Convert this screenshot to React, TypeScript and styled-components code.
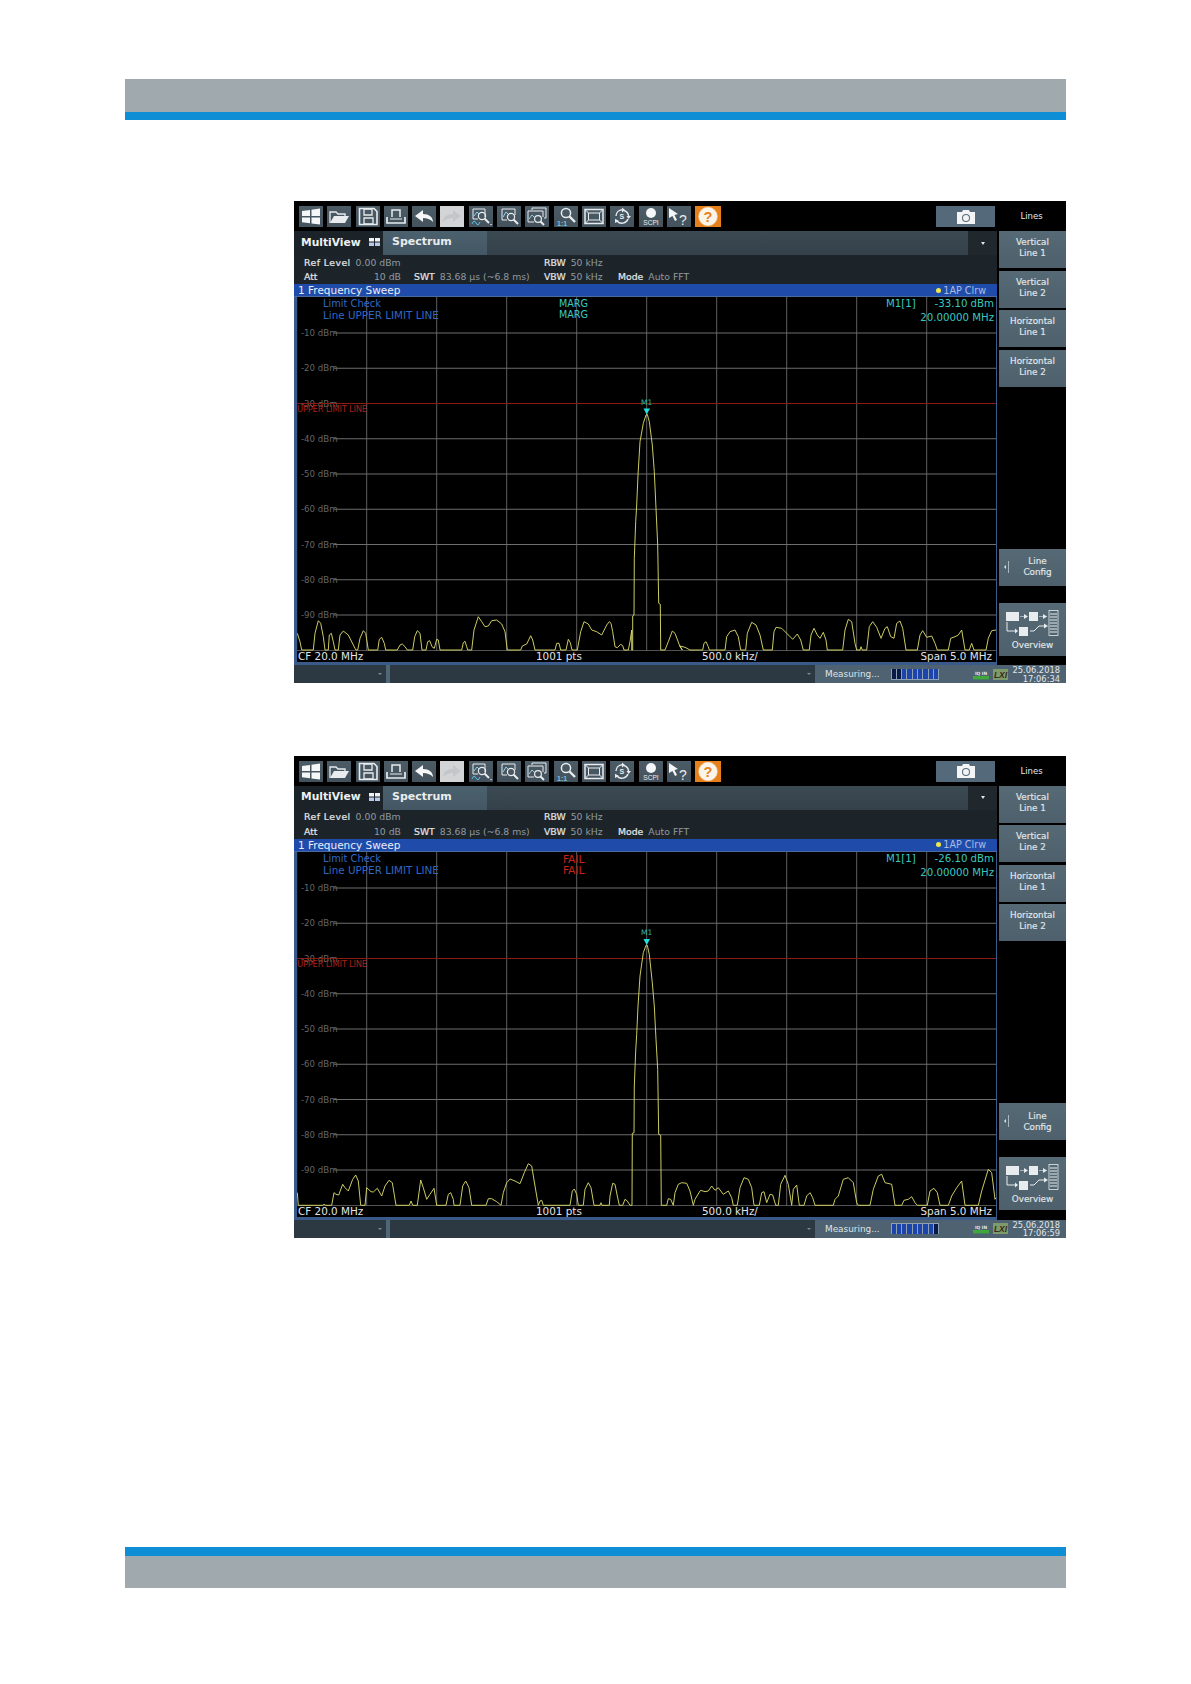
import React from "react";
import styled, { createGlobalStyle } from "styled-components";

const Global = createGlobalStyle`
  html, body { margin: 0; padding: 0; background: #fff; }
  body { font-family: "DejaVu Sans", "Liberation Sans", sans-serif; }
`;

const Page = styled.div`
  width: 1191px;
  height: 1684px;
  padding-top: 79px;
  box-sizing: border-box;
  overflow: hidden;
`;
const HeaderBand = styled.div`
  margin-left: 124.5px;
  width: 941.5px;
  height: 33px;
  background: #a0a9ad;
  border-bottom: 8px solid #0d8ed5;
`;
const FooterBand = styled.div`
  margin: 309.5px 0 0 124.5px;
  width: 941.5px;
  height: 32px;
  background: #a0a9ad;
  border-top: 9px solid #0d8ed5;
`;
const Screens = styled.div`
  margin: 81px 0 0 294px;
  width: 772px;
  display: flex;
  flex-direction: column;
  gap: 72.5px;
`;
const Screen = styled.section`
  width: 772px;
  height: 482px;
  background: #000;
  display: flex;
  flex-direction: column;
  color: #dfe5e8;
`;

/* toolbar */
const TopBar = styled.div`
  height: 30px;
  display: flex;
  flex: none;
`;
const Tools = styled.div`
  flex: 1;
  display: flex;
  align-items: flex-start;
  padding: 5px 4px 0 5px;
  gap: 4.3px;
`;
const Tool = styled.div<{ $tone?: "off" | "help" }>`
  width: ${(p) => (p.$tone === "help" ? 26 : 24)}px;
  height: 21px;
  flex: none;
  background: ${(p) => (p.$tone === "off" ? "#d2d4d5" : p.$tone === "help" ? "#e5801c" : "linear-gradient(#4c5c67, #43525c)")};
  svg { display: block; width: 100%; height: 21px; }
`;
const CameraButton = styled.div`
  margin-left: auto;
  width: 59px;
  height: 21px;
  background: #54697a;
  display: flex;
  align-items: center;
  justify-content: center;
  svg { width: 20px; height: 16px; display: block; }
`;
const PanelTitle = styled.div`
  width: 67px;
  flex: none;
  padding-right: 2px;
  box-sizing: border-box;
  text-align: center;
  font-size: 8.5px;
  line-height: 30px;
  color: #e6e9eb;
`;

/* body */
const Body = styled.div`
  flex: none;
  height: 434px;
  display: flex;
`;
const Main = styled.div`
  width: 703px;
  flex: none;
  display: flex;
  flex-direction: column;
`;
const TabRow = styled.div`
  height: 24px;
  flex: none;
  display: flex;
  align-items: stretch;
  background: #1c2328;
`;
const MultiView = styled.div`
  width: 89px;
  flex: none;
  display: flex;
  align-items: center;
  padding: 0 0 2px 7px;
  box-sizing: border-box;
  font-size: 10.7px;
  font-weight: 700;
  color: #eef0f1;
  gap: 8px;
  svg { width: 11px; height: 8px; flex: none; }
`;
const SpectrumTab = styled.div`
  width: 104px;
  flex: none;
  background: linear-gradient(#4c616e, #435663);
  font-size: 11px;
  font-weight: 700;
  line-height: 22px;
  padding-left: 9px;
  box-sizing: border-box;
  color: #e8ecee;
`;
const TabFill = styled.div`
  flex: 1;
  background: linear-gradient(#3c4a53, #34414a);
`;
const TabMenu = styled.div`
  width: 29px;
  flex: none;
  background: #20282d;
  display: flex;
  align-items: center;
  justify-content: center;
  &::after {
    content: "";
    border-left: 2.5px solid transparent;
    border-right: 2.5px solid transparent;
    border-top: 3px solid #dfe5e8;
  }
`;
const InfoPanel = styled.div`
  height: 29px;
  flex: none;
  background: #1d2429;
  box-sizing: border-box;
  padding: 0 0 0 10px;
  display: grid;
  grid-template-columns: 110px 130px 74px 1fr;
  grid-auto-rows: 14.5px;
  font-size: 9.3px;
  align-items: center;
  white-space: nowrap;
  color: #8f9aa1;
`;
const InfoCell = styled.div`
  display: flex;
  gap: 5px;
`;
const InfoAtt = styled(InfoCell)`
  justify-content: space-between;
  padding-right: 13px;
`;
const InfoKey = styled.span<{ $wide?: boolean }>`
  color: #e4e7e9;
  -webkit-text-stroke: 0.2px #e4e7e9;
  letter-spacing: ${(p) => (p.$wide ? "0.45px" : "0")};
`;
const Frame = styled.div`
  flex: 1;
  display: flex;
  flex-direction: column;
  border-left: 3px solid #3a5a8a;
  border-right: 1px solid #3a5a8a;
  border-bottom: 3px solid #3a5a8a;
`;
const TitleBar = styled.div`
  height: 13px;
  flex: none;
  margin-left: -3px;
  margin-right: -1px;
  padding: 0 11px 0 4px;
  background: #1f4cab;
  border-bottom: 1px solid #4a6aa0;
  box-sizing: border-box;
  display: flex;
  align-items: center;
  justify-content: space-between;
  font-size: 10.5px;
  color: #e9edf6;
`;
const TraceTag = styled.span`
  display: flex;
  align-items: center;
  gap: 2px;
  font-size: 9.6px;
  color: #a9bce0;
  &::before {
    content: "";
    width: 5px;
    height: 5px;
    border-radius: 50%;
    background: #f0e84a;
  }
`;
const Plot = styled.div`
  position: relative;
  height: 354px;
  flex: none;
  background: #000;
  svg { position: absolute; left: 0; top: 0; width: 699px; height: 354px; }
`;
const Overlay = styled.div<{ $x: number; $y: number; $color: string; $right?: boolean; $size?: number }>`
  position: absolute;
  top: ${(p) => p.$y}px;
  ${(p) => (p.$right ? `right: ${p.$x}px;` : `left: ${p.$x}px;`)}
  font-size: ${(p) => p.$size ?? 10.2}px;
  line-height: 12px;
  white-space: nowrap;
  color: ${(p) => p.$color};
`;
const PlotFoot = styled.div`
  height: 11px;
  flex: none;
  display: grid;
  grid-template-columns: 238px 166px 1fr auto;
  padding: 0 4px 0 1px;
  font-size: 10.4px;
  line-height: 11px;
  color: #e2e4e6;
  white-space: nowrap;
`;

/* softkeys */
const Softkeys = styled.aside`
  margin-left: 2px;
  width: 67px;
  flex: none;
  display: flex;
  flex-direction: column;
  gap: 2.67px;
`;
const Softkey = styled.div`
  height: 37px;
  flex: none;
  padding-bottom: 3px;
  box-sizing: border-box;
  background: linear-gradient(#566a76, #4d606c);
  display: flex;
  align-items: center;
  justify-content: center;
  text-align: center;
  font-size: 8.8px;
  line-height: 11px;
  color: #e3e8ea;
  -webkit-text-stroke: 0.15px #e3e8ea;
`;
const LineConfig = styled(Softkey)`
  margin-top: 159.33px;
  padding: 0 0 0 10px;
  position: relative;
  &::before {
    content: "";
    position: absolute;
    left: 5px;
    top: 16px;
    border-top: 2px solid transparent;
    border-bottom: 2px solid transparent;
    border-right: 2px solid #dfe5e8;
  }
  &::after {
    content: "";
    position: absolute;
    left: 9px;
    top: 12px;
    height: 12px;
    border-left: 1px solid #aab6bd;
  }
`;
const Overview = styled(Softkey)`
  margin-top: 14.33px;
  height: 53px;
  flex-direction: column;
  justify-content: flex-start;
  padding: 7px 0 0;
  svg { width: 56px; height: 32px; display: block; margin-bottom: -2px; }
`;

/* status */
const StatusBar = styled.div`
  flex: none;
  height: 18px;
  overflow: hidden;
  display: flex;
  background: #2d3942;
`;
const Combo = styled.div<{ $w: number }>`
  width: ${(p) => p.$w}px;
  flex: none;
  box-sizing: border-box;
  background: #2d3942;
  display: flex;
  align-items: center;
  justify-content: flex-end;
  padding-right: 4px;
  &::after {
    content: "";
    border-left: 2px solid transparent;
    border-right: 2px solid transparent;
    border-top: 2px solid #7d8b94;
  }
`;
const ComboGap = styled.div`
  width: 4px;
  flex: none;
  background: #4e6676;
`;
const StatusRight = styled.div`
  flex: 1;
  background: #4e6272;
  display: flex;
  align-items: center;
  padding: 0 6px 0 10px;
`;
const Measuring = styled.span`
  font-size: 8.9px;
  width: 66px;
  flex: none;
  color: #dfe5e8;
  white-space: nowrap;
`;
const Progress = styled.div`
  width: 48px;
  height: 11px;
  flex: none;
  display: flex;
  gap: 1px;
  padding: 0.5px;
  box-sizing: border-box;
  background: #8ea0b4;
`;
const Segment = styled.div<{ $on: boolean }>`
  flex: 1;
  background: ${(p) => (p.$on ? "#1c44aa" : "#0a1a46")};
`;
const StatusIcons = styled.div`
  margin-left: 34px;
  display: flex;
  gap: 4px;
  align-items: center;
  flex: none;
  svg { display: block; }
`;
const DateTime = styled.div`
  margin-left: auto;
  padding-top: 1px;
  text-align: right;
  font-size: 8.3px;
  line-height: 8.5px;
  color: #e2e6e8;
`;

const Ink = "#e8ecee";

const Icons: React.ReactNode[] = [
  <svg viewBox="0 0 24 21" key="win">
    <path d="M3 5 11 4V10H3Z M12.5 3.8 21 2.6V10H12.5Z M3 11.5H11V17.3L3 16.2Z M12.5 11.5H21V18.6L12.5 17.5Z" fill="#f4f6f7" />
  </svg>,
  <svg viewBox="0 0 24 21" key="open">
    <path d="M3 17V6H9L11 8H18V10" fill="none" stroke={Ink} strokeWidth="1.3" />
    <path d="M3 17 7 10H22L18 17Z" fill={Ink} />
  </svg>,
  <svg viewBox="0 0 24 21" key="save">
    <path d="M3.5 2.5H18L21 5.5V18.5H3.5Z" fill="none" stroke={Ink} strokeWidth="1.6" />
    <path d="M8 3H16V9H8Z M8 12H17V18H8Z" fill="none" stroke={Ink} strokeWidth="1.3" />
  </svg>,
  <svg viewBox="0 0 24 21" key="print">
    <path d="M8 11V4H16V11" fill="none" stroke={Ink} strokeWidth="1.5" />
    <path d="M3 11V17H21V11" fill="none" stroke={Ink} strokeWidth="1.7" />
    <path d="M6 13H18" stroke={Ink} strokeWidth="1" />
  </svg>,
  <svg viewBox="0 0 24 21" key="back">
    <path d="M3 10 11 4V8C17 8 21 11 21 16 18 13 15 12 11 12V16Z" fill="#f4f6f7" />
  </svg>,
  <svg viewBox="0 0 24 21" key="fwd">
    <path d="M21 10 13 4V8C7 8 3 11 3 16 6 13 9 12 13 12V16Z" fill="#c4c7c9" />
  </svg>,
  <svg viewBox="0 0 24 21" key="zoomA">
    <path d="M4 3H16V11" fill="none" stroke={Ink} strokeWidth="1" />
    <path d="M4 3V13H9" fill="none" stroke={Ink} strokeWidth="1" />
    <path d="M5 10 8 6 10 8" fill="none" stroke="#8fd0e8" strokeWidth="1" />
    <circle cx="13" cy="10" r="3.6" fill="none" stroke={Ink} strokeWidth="1.2" />
    <path d="M15.5 12.5 20 17" stroke={Ink} strokeWidth="2" />
    <path d="M3 18Q5 13 7 17T11 16" fill="none" stroke="#5cc0e8" strokeWidth="1" />
    <path d="M21 18H23L22 19.5Z" fill={Ink} />
  </svg>,
  <svg viewBox="0 0 24 21" key="zoomB">
    <path d="M5 3H18V9 M5 3V14H10" fill="none" stroke={Ink} strokeWidth="1" />
    <path d="M6 11 9 6 11 8" fill="none" stroke="#8fd0e8" strokeWidth="1" />
    <circle cx="14" cy="11" r="3.6" fill="none" stroke={Ink} strokeWidth="1.2" />
    <path d="M16.5 13.5 21 18" stroke={Ink} strokeWidth="2" />
  </svg>,
  <svg viewBox="0 0 24 21" key="zoomC">
    <path d="M7 4V2H21V12H19" fill="none" stroke={Ink} strokeWidth="1" />
    <path d="M3 5H18V11 M3 5V16H9" fill="none" stroke={Ink} strokeWidth="1" />
    <path d="M4 13 7 9 9 11" fill="none" stroke="#8fd0e8" strokeWidth="1" />
    <circle cx="13" cy="13" r="3.4" fill="none" stroke={Ink} strokeWidth="1.2" />
    <path d="M15.5 15.5 19 19" stroke={Ink} strokeWidth="2" />
  </svg>,
  <svg viewBox="0 0 24 21" key="one">
    <circle cx="12" cy="7" r="4.6" fill="none" stroke={Ink} strokeWidth="1.5" />
    <path d="M15.5 10.5 21 16" stroke={Ink} strokeWidth="2.4" />
    <text x="3" y="19.5" fontSize="7" fontWeight="700" fill="#6fc4e8" fontFamily="Liberation Sans, sans-serif">1:1</text>
  </svg>,
  <svg viewBox="0 0 24 21" key="full">
    <path d="M3 3.5H21V17.5H3Z" fill="none" stroke={Ink} strokeWidth="1.5" />
    <path d="M3 3.5 6.5 7H17.5L21 3.5 M3 17.5 6.5 14H17.5L21 17.5 M6.5 7V14 M17.5 7V14" fill="none" stroke={Ink} strokeWidth="1" />
  </svg>,
  <svg viewBox="0 0 24 21" key="seq">
    <path d="M6 10A6.5 6.5 0 0 1 12 3.8M14 4.5A6.5 6.5 0 0 1 18.6 10M18 13A6.5 6.5 0 0 1 7 15" fill="none" stroke={Ink} strokeWidth="1.4" />
    <path d="M12 1.5 15 4 12 6.5Z M16.5 10H21L18.6 13Z M5 17 5 12.8 9 15Z" fill={Ink} />
    <text x="9.5" y="12.5" fontSize="7" fontWeight="700" fill={Ink} fontFamily="Liberation Sans, sans-serif">S</text>
  </svg>,
  <svg viewBox="0 0 24 21" key="scpi">
    <circle cx="12" cy="7" r="5" fill="#f4f6f7" />
    <text x="12" y="19" textAnchor="middle" fontSize="6.6" fontWeight="400" fill={Ink} fontFamily="Liberation Sans, sans-serif">SCPI</text>
  </svg>,
  <svg viewBox="0 0 24 21" key="what">
    <path d="M2 2 11 8 7.5 9 10 14 8 15 5.5 10 2 12Z" fill="#f4f6f7" />
    <text x="12" y="19" fontSize="14" fill={Ink} fontFamily="Liberation Sans, sans-serif">?</text>
  </svg>,
  <svg viewBox="0 0 24 21" key="help">
    <circle cx="12" cy="10.5" r="9.3" fill="#fbf4ea" stroke="#f8e0c0" strokeWidth="0.6" />
    <text x="12" y="15.5" textAnchor="middle" fontSize="14.5" fontWeight="700" fill="#e5801c" fontFamily="Liberation Sans, sans-serif">?</text>
  </svg>,
];

type Pt = number[];
const conv = (list: Pt, ox: number, oy: number, topY: number) => {
  const out: string[] = [];
  for (let i = 0; i < list.length; i += 2) {
    out.push(`${(ox + list[i] / 3 - 297).toFixed(1)},${(oy + list[i + 1] / 3 - topY).toFixed(1)}`);
  }
  return out.join(" ");
};

const T1 =
  conv([22,100,30,125,35,150,70,150,75,100,85,62,92,70,100,110,105,150,115,150,118,105,124,100,130,125,135,150,145,150,150,105,160,93,175,105,195,145,198,150,203,150,210,115,220,92,227,100,235,150,263,150,268,118,275,112,283,130,287,150,322,150,330,135,337,132,345,140,352,150,368,150,374,110,382,92,390,100,396,150,408,150,413,125,419,122,426,140,433,145,440,118,445,120,450,150,515,150,520,128,525,124,530,140,533,150,545,150,552,90,565,50,575,65,585,80,595,78,605,62,620,60,635,72,645,95,652,150,692,150,697,138,710,132,722,107,728,120,735,150,795,150,800,130,807,130,812,150,828,150,835,118,841,128,846,150,862,150,872,95,882,65,895,72,905,90,920,95,935,105,950,75,958,65], 290, 600, 297) +
  " " +
  conv([3,685,8,710,15,755,22,758,32,748,38,752,42,765,55,765,60,740,65,705,65,765,68,765,68,663,72,660,73,490,77,380,80,330,84,240,90,140,100,85,108,60,112,58,118,80,127,150,133,230,138,340,143,450,146,625,151,628,152,765,165,765,175,740,187,708,195,715,210,755,217,765], 610, 395, 297) +
  " " +
  conv([0,318,15,322,30,330,68,330,72,310,78,305,85,320,88,330,135,330,140,290,150,275,165,270,175,290,182,330,197,330,202,280,215,247,228,255,240,285,250,330,277,330,282,275,288,262,305,265,320,280,338,298,352,282,362,300,370,330,388,330,393,285,402,265,412,285,420,295,430,277,438,300,442,330,488,330,495,270,505,238,515,245,525,310,530,330,540,330,543,320,547,330,560,330,568,260,578,245,590,262,603,295,615,265,622,260,632,290,642,295,650,250,660,243,668,265,678,330,712,330,720,285,728,272,740,292,755,288,765,310,772,330,805,330,812,295,825,290,835,285,845,270,855,330,868,330,875,310,882,330,918,330,925,295,935,272,948,270], 680, 540, 297);

const T2 =
  conv([22,185,25,223,98,223,102,220,107,223,125,223,132,185,138,190,146,192,158,160,165,170,175,180,188,145,197,132,205,150,212,223,225,223,230,170,243,182,250,183,262,172,275,195,285,165,297,148,307,155,318,223,358,223,363,210,368,223,382,223,392,147,400,170,410,205,420,190,432,172,440,223,468,223,475,190,482,185,490,205,492,223,510,223,518,165,527,150,537,170,545,223,588,223,595,203,605,203,620,212,633,223,640,185,650,155,660,144,675,150,690,158,703,125,715,98,725,105,735,165,745,223,750,210,755,208,760,223,840,223,847,180,853,174,860,190,865,223,880,223,885,175,895,155,903,170,912,223,930,223,933,215,936,223,958,223], 290, 1130, 851) +
  " " +
  conv([0,810,8,772,15,775,22,810,28,838,38,838,45,820,52,825,60,838,66,838,67,622,72,620,73,480,77,375,80,325,84,240,90,150,100,80,108,58,112,58,118,85,127,170,133,240,138,340,143,430,146,625,152,628,154,838,170,838,175,818,182,820,190,838,195,800,205,775,215,770,230,772,240,795,250,838,255,820,270,795], 610, 925, 851) +
  " " +
  conv([62,178,75,182,85,180,95,165,105,178,115,170,130,190,145,180,155,200,160,223,172,223,180,170,192,140,205,145,215,170,222,223,238,223,245,185,252,182,260,215,270,190,278,192,287,223,295,223,302,160,315,133,325,160,335,223,340,175,350,162,358,223,372,223,380,195,390,185,398,200,405,223,460,223,465,205,475,195,490,145,505,140,520,155,530,215,535,223,570,223,580,175,595,135,605,130,615,155,635,160,645,223,665,223,672,208,685,205,695,197,705,215,712,223,742,223,750,180,762,172,772,185,780,223,805,223,815,195,830,170,845,150,855,223,895,223,905,180,925,115,935,125,945,205,948,200], 680, 1130, 851);

const gridX = [0, 1, 2, 3, 4, 5, 6, 7, 8, 9].map((i) => i * 70 - 0.3);
const dbLabels = [-10, -20, -30, -40, -50, -60, -70, -80, -90];
const rowY = (i: number) => 36 + i * 35.25;

type ScreenData = {
  status: string;
  statusColor: string;
  level: string;
  time: string;
  trace: string;
  tip: number;
  lit: number;
};

const OverviewGlyph = () => (
  <svg viewBox="0 0 56 32">
    <rect x="1" y="2" width="13" height="9" fill="#e8ecee" />
    <rect x="24" y="2" width="9" height="9" fill="#e8ecee" />
    <rect x="44" y="0.5" width="9" height="25" fill="none" stroke="#e8ecee" strokeWidth="0.8" />
    <path d="M45 4H52M45 7H52M45 10H52M45 13H52M45 16H52M45 19H52M45 22H52" stroke="#e8ecee" strokeWidth="1.2" />
    <path d="M15 6.5H22M34 6.5H42" stroke="#9fb2bd" strokeWidth="1" />
    <path d="M19 4 23 6.5 19 9ZM38 4 42 6.5 38 9Z" fill="#e8ecee" />
    <rect x="14" y="17" width="9" height="9" fill="#e8ecee" />
    <path d="M2 12V21H11" fill="none" stroke="#e8ecee" strokeWidth="1" />
    <path d="M10 18.5 13 21 10 23.5Z" fill="#e8ecee" />
    <path d="M25 21H29L34 16H39" fill="none" stroke="#e8ecee" strokeWidth="1" />
    <path d="M39 13.5 43 16 39 18.5Z" fill="#e8ecee" />
  </svg>
);

const Analyzer = ({ d }: { d: ScreenData }) => {
  const fail = d.status === "FAIL";
  const statusX = fail ? 266 : 262;
  const statusSize = fail ? 10.6 : 9.6;
  return (
    <Screen>
      <TopBar>
        <Tools>
          {Icons.map((icon, i) => (
            <Tool key={i} $tone={i === 5 ? "off" : i === 14 ? "help" : undefined}>
              {icon}
            </Tool>
          ))}
          <CameraButton>
            <svg viewBox="0 0 20 16">
              <path d="M1 3H6L7 1H13L14 3H19V15H1Z" fill="#f2f4f5" />
              <circle cx="10" cy="9" r="4" fill="#54697a" />
              <circle cx="10" cy="9" r="3" fill="#f2f4f5" />
            </svg>
          </CameraButton>
        </Tools>
        <PanelTitle>Lines</PanelTitle>
      </TopBar>
      <Body>
        <Main>
          <TabRow>
            <MultiView>
              MultiView
              <svg viewBox="0 0 11 8">
                <path d="M0 0H5V3.5H0ZM6 0H11V3.5H6Z" fill="#f0f2f3" />
                <path d="M0 4.5H5V8H0ZM6 4.5H11V8H6Z" fill="#b7c8e8" />
              </svg>
            </MultiView>
            <SpectrumTab>Spectrum</SpectrumTab>
            <TabFill />
            <TabMenu />
          </TabRow>
          <InfoPanel>
            <InfoCell>
              <InfoKey $wide>Ref Level</InfoKey>
              <span>0.00 dBm</span>
            </InfoCell>
            <span />
            <InfoCell>
              <InfoKey>RBW</InfoKey>
              <span>50 kHz</span>
            </InfoCell>
            <span />
            <InfoAtt>
              <InfoKey>Att</InfoKey>
              <span>10 dB</span>
            </InfoAtt>
            <InfoCell>
              <InfoKey>SWT</InfoKey>
              <span>83.68 µs (~6.8 ms)</span>
            </InfoCell>
            <InfoCell>
              <InfoKey>VBW</InfoKey>
              <span>50 kHz</span>
            </InfoCell>
            <InfoCell>
              <InfoKey>Mode</InfoKey>
              <span>Auto FFT</span>
            </InfoCell>
          </InfoPanel>
          <Frame>
            <TitleBar>
              <span>1 Frequency Sweep</span>
              <TraceTag>1AP Clrw</TraceTag>
            </TitleBar>
            <Plot>
              <svg viewBox="0 0 699 354">
                {gridX.map((x) => (
                  <line key={x} x1={x} x2={x} y1="0" y2="354" stroke="#5f5f5f" strokeWidth="1" />
                ))}
                {dbLabels.map((db, i) => (
                  <g key={db}>
                    <line x1="37" x2="699" y1={rowY(i)} y2={rowY(i)} stroke="#6e6e6e" strokeWidth="1" />
                    <text x="4" y={rowY(i) + 3} fontSize="8.6" fill="#666" fontFamily="DejaVu Sans, sans-serif">
                      {db} dBm
                    </text>
                  </g>
                ))}
                <line x1="0" x2="699" y1="354" y2="354" stroke="#6e6e6e" strokeWidth="1.4" />
                <line x1="0" x2="699" y1="106.5" y2="106.5" stroke="#8a1c16" strokeWidth="1" />
                <text x="0" y="115" fontSize="8.4" fill="#a8201a" fontFamily="DejaVu Sans, sans-serif" textLength="70">
                  UPPER LIMIT LINE
                </text>
                <polyline points={d.trace} fill="none" stroke="#d6d668" strokeWidth="0.95" />
                <text x="349.7" y={d.tip - 10} textAnchor="middle" fontSize="7.5" fill="#2fb8b4" fontFamily="DejaVu Sans, sans-serif">
                  M1
                </text>
                <path d={`M346.5 ${d.tip - 6}H353L349.7 ${d.tip}Z`} fill="#22e0e0" />
              </svg>
              <Overlay $x={26} $y={1} $color="#2f68c4" $size={9.9}>Limit Check</Overlay>
              <Overlay $x={26} $y={12} $color="#2f68c4" $size={10.4}>Line UPPER LIMIT LINE</Overlay>
              <Overlay $x={statusX} $y={1} $color={d.statusColor} $size={statusSize}>{d.status}</Overlay>
              <Overlay $x={statusX} $y={12} $color={d.statusColor} $size={statusSize}>{d.status}</Overlay>
              <Overlay $x={589} $y={1} $color="#38c8c0">M1[1]</Overlay>
              <Overlay $x={2} $y={1} $right $color="#38c8c0">{d.level} dBm</Overlay>
              <Overlay $x={2} $y={15} $right $color="#38c8c0">20.00000 MHz</Overlay>
            </Plot>
            <PlotFoot>
              <span>CF 20.0 MHz</span>
              <span>1001 pts</span>
              <span>500.0 kHz/</span>
              <span>Span 5.0 MHz</span>
            </PlotFoot>
          </Frame>
        </Main>
        <Softkeys>
          <Softkey>Vertical<br />Line 1</Softkey>
          <Softkey>Vertical<br />Line 2</Softkey>
          <Softkey>Horizontal<br />Line 1</Softkey>
          <Softkey>Horizontal<br />Line 2</Softkey>
          <LineConfig>Line<br />Config</LineConfig>
          <Overview>
            <OverviewGlyph />
            Overview
          </Overview>
        </Softkeys>
      </Body>
      <StatusBar>
        <Combo $w={92} />
        <ComboGap />
        <Combo $w={425} />
        <StatusRight>
          <Measuring>Measuring...</Measuring>
          <Progress>
            {Array.from({ length: 9 }, (_, i) => (
              <Segment key={i} $on={d.lit > 0 ? i < d.lit : i >= -d.lit} />
            ))}
          </Progress>
          <StatusIcons>
            <svg width="16" height="11" viewBox="0 0 16 11">
              <text x="8" y="5.5" textAnchor="middle" fontSize="4.4" fontWeight="700" fill="#e2e6e8" fontFamily="DejaVu Sans, sans-serif">IQ IN</text>
              <rect x="0" y="7" width="16" height="3.4" fill="#3fa83a" />
            </svg>
            <svg width="15" height="11" viewBox="0 0 15 11">
              <rect x="0" y="0" width="15" height="11" fill="#7e9a6a" />
              <text x="7.5" y="9" textAnchor="middle" fontSize="8.5" fontWeight="700" fontStyle="italic" fill="#3a2a1a" fontFamily="Liberation Sans, sans-serif">LXI</text>
            </svg>
          </StatusIcons>
          <DateTime>
            25.06.2018
            <br />
            {d.time}
          </DateTime>
        </StatusRight>
      </StatusBar>
    </Screen>
  );
};

const first: ScreenData = {
  status: "MARG",
  statusColor: "#3cc8c0",
  level: "-33.10",
  time: "17:06:34",
  trace: T1,
  tip: 117.5,
  lit: -2,
};
const second: ScreenData = {
  status: "FAIL",
  statusColor: "#c8241e",
  level: "-26.10",
  time: "17:06:59",
  trace: T2,
  tip: 93,
  lit: 8,
};

export default function App() {
  return (
    <Page>
      <Global />
      <HeaderBand />
      <Screens>
        <Analyzer d={first} />
        <Analyzer d={second} />
      </Screens>
      <FooterBand />
    </Page>
  );
}
